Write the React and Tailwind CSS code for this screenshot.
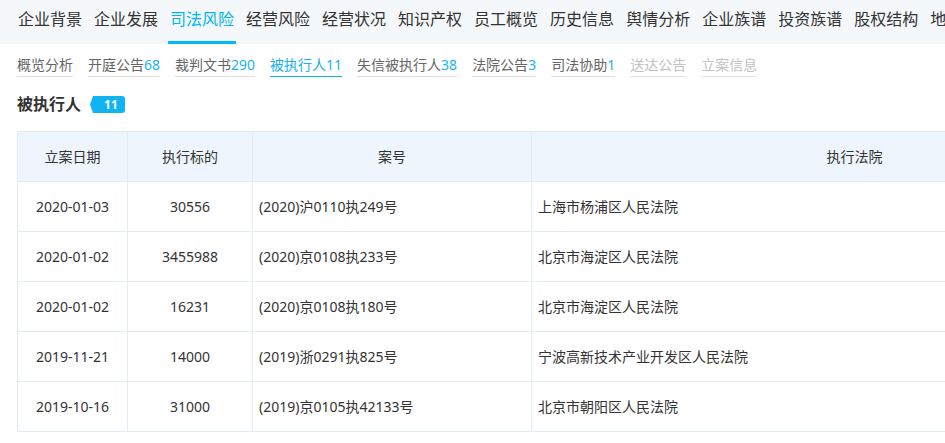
import React from 'react';

const navItems = [
  '企业背景', '企业发展', '司法风险', '经营风险', '经营状况', '知识产权',
  '员工概览', '历史信息', '舆情分析', '企业族谱', '投资族谱', '股权结构', '地理位置'
];

const subTabs = [
  { label: '概览分析' },
  { label: '开庭公告', count: 68 },
  { label: '裁判文书', count: 290 },
  { label: '被执行人', count: 11, active: true },
  { label: '失信被执行人', count: 38 },
  { label: '法院公告', count: 3 },
  { label: '司法协助', count: 1 },
  { label: '送达公告', disabled: true },
  { label: '立案信息', disabled: true }
];

const rows = [
  { date: '2020-01-03', amount: '30556', caseNo: '(2020)沪0110执249号', court: '上海市杨浦区人民法院' },
  { date: '2020-01-02', amount: '3455988', caseNo: '(2020)京0108执233号', court: '北京市海淀区人民法院' },
  { date: '2020-01-02', amount: '16231', caseNo: '(2020)京0108执180号', court: '北京市海淀区人民法院' },
  { date: '2019-11-21', amount: '14000', caseNo: '(2019)浙0291执825号', court: '宁波高新技术产业开发区人民法院' },
  { date: '2019-10-16', amount: '31000', caseNo: '(2019)京0105执42133号', court: '北京市朝阳区人民法院' }
];

const App = () => {
  return (
    <div
      className="w-[945px] h-[443px] overflow-hidden bg-white text-[#333]"
      style={{ fontFamily: '"Noto Sans", "Noto Sans CJK SC", sans-serif' }}
    >
      {/* Main nav */}
      <div className="h-[44px] bg-[#f4f8fb] flex pl-[16px] gap-[8px] whitespace-nowrap overflow-hidden">
        {navItems.map(item => {
          const active = item === '司法风险';
          return (
            <div
              key={item}
              className={`relative px-[2px] h-full flex items-center pb-[6px] text-[16px] ${active ? 'text-[#00b6f2]' : 'text-[#333]'}`}
            >
              {item}
              {active && <span className="absolute left-0 right-0 bottom-0 h-[3px] bg-[#00b9f6]" />}
            </div>
          );
        })}
      </div>

      {/* Sub tabs */}
      <div className="flex gap-[15px] pl-[17px] pt-[11px] whitespace-nowrap">
        {subTabs.map(tab => (
          <div
            key={tab.label}
            className={`h-[22px] leading-[20px] text-[14px] border-b ${
              tab.active
                ? 'border-[#0fb4ee] text-[#14b2ec]'
                : tab.disabled
                ? 'border-[#e4e4e4] text-[#c2c2c2]'
                : 'border-[#dedede] text-[#666]'
            }`}
          >
            {tab.label}
            {tab.count !== undefined && <span className="text-[#18b4ee]">{tab.count}</span>}
          </div>
        ))}
      </div>

      {/* Section title */}
      <div className="flex items-center pl-[17px] pt-[13px] h-[41px]">
        <span className="text-[16px] font-bold text-[#333]">被执行人</span>
        <span className="ml-[9px] flex items-center h-[17px]">
          <svg width="7" height="17" viewBox="0 0 7 17" className="block">
            <path d="M7 0 L3 0 L0 8.5 L3 17 L7 17 Z" fill="#12b4f0" />
          </svg>
          <span className="h-[17px] px-[7px] bg-[#12b4f0] rounded-r-[3px] text-white text-[12px] font-bold leading-[17px]">
            11
          </span>
        </span>
      </div>

      {/* Table */}
      <div className="pl-[17px] pt-[13px]">
        <table className="border-collapse table-fixed w-[1160px] text-[14px]">
          <colgroup>
            <col className="w-[110px]" />
            <col className="w-[125px]" />
            <col className="w-[279px]" />
            <col className="w-[646px]" />
          </colgroup>
          <thead>
            <tr className="h-[50px] bg-[#eef5fc]">
              <th className="border border-[#e1ecf7] font-normal text-[#333] text-center">立案日期</th>
              <th className="border border-[#e1ecf7] font-normal text-[#333] text-center">执行标的</th>
              <th className="border border-[#e1ecf7] font-normal text-[#333] text-center">案号</th>
              <th className="border border-[#e1ecf7] font-normal text-[#333] text-center">执行法院</th>
            </tr>
          </thead>
          <tbody>
            {rows.map((row, i) => (
              <tr key={i} className="h-[50px]">
                <td className="border border-[#e1ecf7] text-center">{row.date}</td>
                <td className="border border-[#e1ecf7] text-center">{row.amount}</td>
                <td className="border border-[#e1ecf7] pl-[6px]">{row.caseNo}</td>
                <td className="border border-[#e1ecf7] pl-[6px]">{row.court}</td>
              </tr>
            ))}
          </tbody>
        </table>
      </div>
    </div>
  );
};

export default App;
